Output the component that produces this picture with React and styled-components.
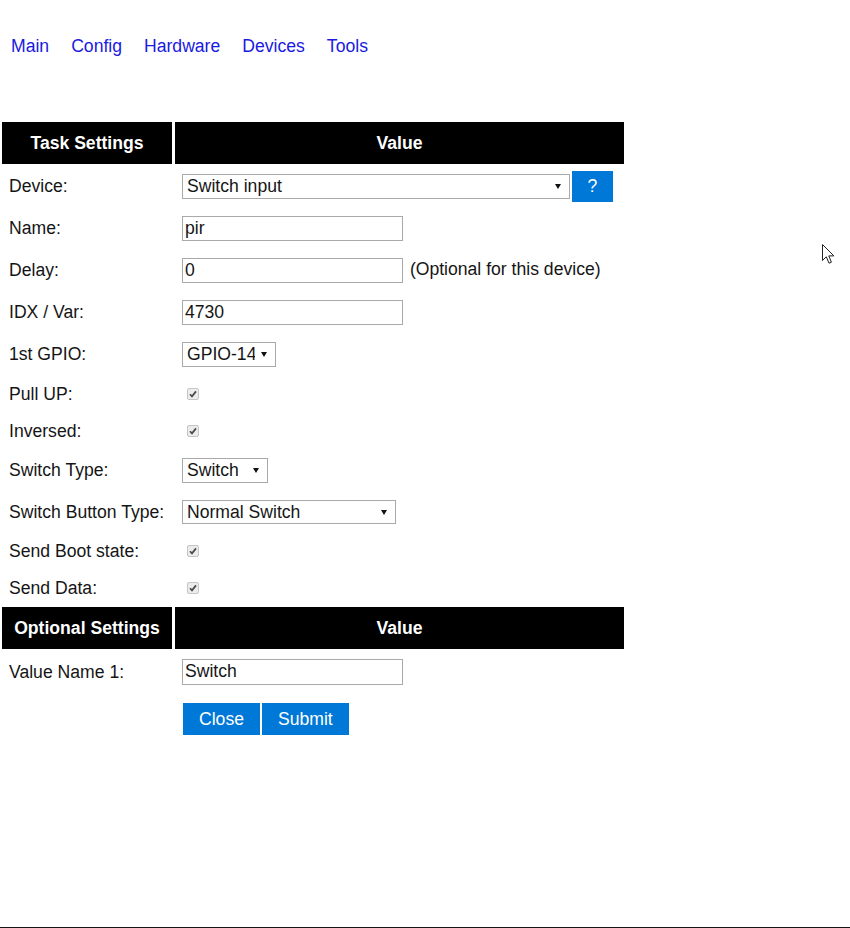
import React from 'react';
import styled, { createGlobalStyle } from 'styled-components';

const Global = createGlobalStyle`
  html, body { margin: 0; padding: 0; background: #fff; }
  body {
    font-family: "Liberation Sans", Arial, sans-serif;
    font-size: 17.6px;
    color: #151515;
  }
`;

const Page = styled.div`
  position: relative;
  min-height: 100vh;
  box-sizing: border-box;
  border-bottom: 1px solid #151515;
`;

const Nav = styled.nav`
  display: flex;
  padding-top: 36px;
  height: 20px;
  line-height: 20px;
`;

const NavLink = styled.a`
  color: #1a1ae0;
  text-decoration: none;
  padding: 0 11px;
`;

const Table = styled.table`
  margin-top: 64px;
  border-collapse: separate;
  border-spacing: 2px;
  font-size: 17.6px;
  font-family: "Liberation Sans", Arial, sans-serif;
  color: #151515;
`;

const Th = styled.th`
  background: #000;
  color: #fff;
  font-weight: bold;
  text-align: center;
  height: 42px;
  padding: 0;
  width: ${p => p.$w}px;
  box-sizing: border-box;
  border-left: ${p => (p.$value ? '1px solid #fff' : 'none')};
`;

const Td = styled.td`
  padding: 7.5px 7px 7.5px ${p => (p.$value ? 8 : 7)}px;
  line-height: 20px;
  vertical-align: middle;
  white-space: nowrap;
`;

const TextInput = styled.input`
  box-sizing: border-box;
  width: 221px;
  height: ${p => p.$h || 25}px;
  border: 1px solid #a9a9a9;
  padding: 0 2px;
  font: inherit;
  color: #151515;
  vertical-align: middle;
  outline: none;
`;

const SelectWrap = styled.span`
  position: relative;
  display: inline-block;
  vertical-align: middle;
  width: ${p => p.$w}px;
  height: ${p => p.$h || 25}px;
  &::after {
    content: "";
    position: absolute;
    right: 9px;
    top: 50%;
    margin-top: -2px;
    border-left: 3.5px solid transparent;
    border-right: 3.5px solid transparent;
    border-top: 5px solid #111;
    pointer-events: none;
  }
`;

const Select = styled.select`
  appearance: none;
  -webkit-appearance: none;
  box-sizing: border-box;
  width: 100%;
  height: 100%;
  border: 1px solid #a9a9a9;
  border-radius: 0;
  background: #fff;
  padding: 0 20px 0 4px;
  font: inherit;
  color: #151515;
  outline: none;
`;

const HelpButton = styled.button`
  vertical-align: middle;
  margin: -3px 0 -3px 2px;
  width: 41px;
  height: 31px;
  border: none;
  background: #0078d7;
  color: #fff;
  font: inherit;
  padding: 0;
`;

const Note = styled.span`
  margin-left: 2px;
`;

const Check = styled.span`
  display: inline-block;
  vertical-align: middle;
  box-sizing: border-box;
  width: 12px;
  height: 12px;
  margin: -2px 0 0 5px;
  border: 1px solid #c6c6c6;
  border-radius: 2px;
  background: #ececec;
  svg { display: block; }
`;

const Buttons = styled.div`
  display: flex;
  gap: 2px;
  margin: 1px 0 0 1px;
`;

const Button = styled.button`
  height: 32px;
  padding: 0 16px;
  border: none;
  border-radius: 0;
  background: #0078d7;
  color: #fff;
  font: inherit;
`;

const Cursor = styled.svg`
  position: absolute;
  left: 822px;
  top: 244px;
`;

const CheckBox = () => (
  <Check>
    <svg width="10" height="10" viewBox="0 0 10 10">
      <path d="M2 5.2 L4 7.4 L8 2.4" fill="none" stroke="#4a4a4a" strokeWidth="1.7" />
    </svg>
  </Check>
);

const Row = ({ label, children }) => (
  <tr>
    <Td>{label}</Td>
    <Td $value>{children}</Td>
  </tr>
);

const Header = ({ title }) => (
  <tr>
    <Th $w={170}>{title}</Th>
    <Th $w={450} $value>Value</Th>
  </tr>
);

export default function App() {
  return (
    <Page>
      <Global />
      <Nav>
        <NavLink href="#">Main</NavLink>
        <NavLink href="#">Config</NavLink>
        <NavLink href="#">Hardware</NavLink>
        <NavLink href="#">Devices</NavLink>
        <NavLink href="#">Tools</NavLink>
      </Nav>
      <Table>
        <tbody>
          <Header title="Task Settings" />
          <Row label="Device:">
            <SelectWrap $w={388}>
              <Select defaultValue="sw"><option value="sw">Switch input</option></Select>
            </SelectWrap>
            <HelpButton>?</HelpButton>
          </Row>
          <Row label="Name:"><TextInput defaultValue="pir" /></Row>
          <Row label="Delay:"><TextInput defaultValue="0" /> <Note>(Optional for this device)</Note></Row>
          <Row label="IDX / Var:"><TextInput defaultValue="4730" /></Row>
          <Row label="1st GPIO:">
            <SelectWrap $w={94}>
              <Select defaultValue="14"><option value="14">GPIO-14</option></Select>
            </SelectWrap>
          </Row>
          <Row label="Pull UP:"><CheckBox /></Row>
          <Row label="Inversed:"><CheckBox /></Row>
          <Row label="Switch Type:">
            <SelectWrap $w={86}>
              <Select defaultValue="s"><option value="s">Switch</option></Select>
            </SelectWrap>
          </Row>
          <Row label="Switch Button Type:">
            <SelectWrap $w={214} $h={24}>
              <Select defaultValue="n"><option value="n">Normal Switch</option></Select>
            </SelectWrap>
          </Row>
          <Row label="Send Boot state:"><CheckBox /></Row>
          <Row label="Send Data:"><CheckBox /></Row>
          <Header title="Optional Settings" />
          <Row label="Value Name 1:"><TextInput defaultValue="Switch" $h={26} /></Row>
          <Row label="">
            <Buttons>
              <Button>Close</Button>
              <Button>Submit</Button>
            </Buttons>
          </Row>
        </tbody>
      </Table>
      <Cursor width="14" height="21" viewBox="0 0 14 21">
        <path d="M0.5 0.5 L0.5 16.5 L4.3 12.8 L7 19.2 L9.4 18.2 L6.8 11.9 L11.9 11.9 Z" fill="#fff" stroke="#222" strokeWidth="1" strokeLinejoin="round" />
      </Cursor>
    </Page>
  );
}
